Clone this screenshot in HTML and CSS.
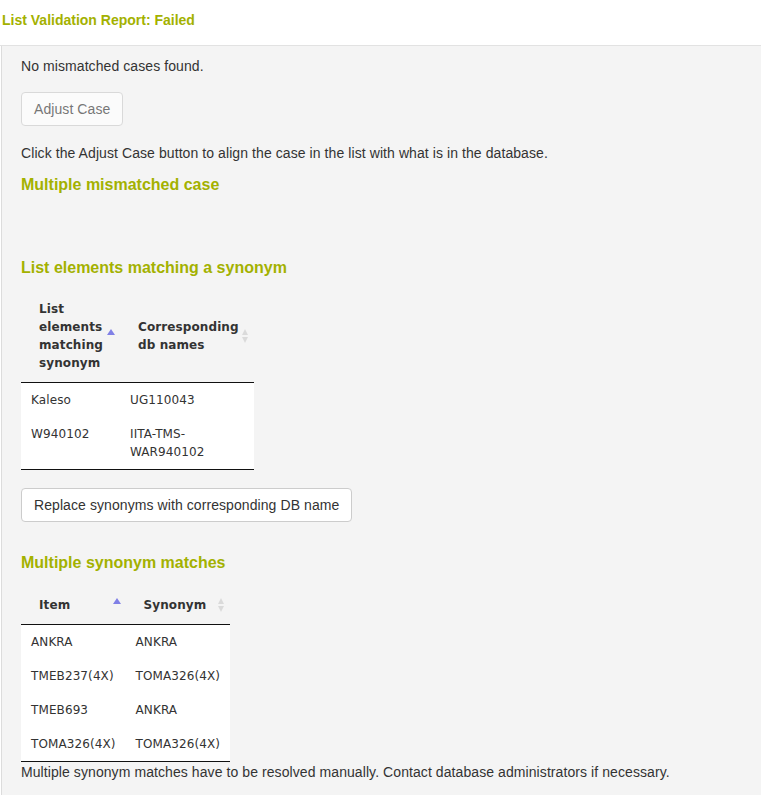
FILE: index.html
```html
<!DOCTYPE html>
<html>
<head>
<meta charset="utf-8">
<link rel="stylesheet" href="styles.css">
</head>
<body>
<div class="modal-header">
  <h3 class="modal-title">List Validation Report: Failed</h3>
</div>
<div class="panel">
  <p class="msg msg-first">No mismatched cases found.</p>
  <button class="btn btn-disabled btn-adjust" disabled>Adjust Case</button>
  <p class="msg msg-click">Click the Adjust Case button to align the case in the list with what is in the database.</p>
  <h4 class="section-title title-mismatch">Multiple mismatched case</h4>
  <h4 class="section-title title-synonym">List elements matching a synonym</h4>
  <table class="data-table table-synonyms">
    <thead>
      <tr>
        <th class="col-a sort-asc">List elements matching synonym</th>
        <th class="col-b sort-both">Corresponding db names</th>
      </tr>
    </thead>
    <tbody>
      <tr><td>Kaleso</td><td>UG110043</td></tr>
      <tr><td>W940102</td><td>IITA-TMS-WAR940102</td></tr>
    </tbody>
  </table>
  <button class="btn btn-replace">Replace synonyms with corresponding DB name</button>
  <h4 class="section-title title-multi">Multiple synonym matches</h4>
  <table class="data-table table-multi">
    <thead>
      <tr>
        <th class="sort-asc">Item</th>
        <th class="sort-both">Synonym</th>
      </tr>
    </thead>
    <tbody>
      <tr><td>ANKRA</td><td>ANKRA</td></tr>
      <tr><td>TMEB237(4X)</td><td>TOMA326(4X)</td></tr>
      <tr><td>TMEB693</td><td>ANKRA</td></tr>
      <tr><td>TOMA326(4X)</td><td>TOMA326(4X)</td></tr>
    </tbody>
  </table>
  <p class="msg msg-last">Multiple synonym matches have to be resolved manually. Contact database administrators if necessary.</p>
</div>
</body>
</html>
```

FILE: styles.css
```css
html, body {
  margin: 0;
  padding: 0;
  background: #ffffff;
}
body {
  font-family: "Liberation Sans", Arial, Helvetica, sans-serif;
  font-size: 14px;
  line-height: 20px;
  color: #333333;
  min-height: 100vh;
  display: flex;
  flex-direction: column;
}
.modal-header {
  box-sizing: border-box;
  height: 46px;
  padding: 10px 2px 0 2px;
  border-bottom: 1px solid #e2e2e2;
  background: #ffffff;
}
.modal-title {
  margin: 0;
  font-size: 14px;
  font-weight: bold;
  line-height: 20px;
  color: #a3b100;
}
.panel {
  flex: 1;
  margin-left: 1px;
  border-left: 1px solid #dcdcdc;
  background: #f4f4f4;
  padding: 10px 0 20px 19px;
  display: flex;
  flex-direction: column;
  align-items: flex-start;
}
.msg {
  margin: 0;
  line-height: 20px;
  letter-spacing: 0.08px;
}
.msg-first { margin-bottom: 16px; }
.btn {
  box-sizing: border-box;
  height: 34px;
  padding: 6px 12px;
  font-family: "Liberation Sans", Arial, Helvetica, sans-serif;
  font-size: 14px;
  line-height: 20px;
  letter-spacing: 0.08px;
  color: #333333;
  background: #ffffff;
  border: 1px solid #cccccc;
  border-radius: 4px;
}
.btn-disabled {
  opacity: 0.65;
}
.btn-adjust { margin-bottom: 17px; }
.msg-click { margin-bottom: 13px; }
.section-title {
  margin: 0;
  font-size: 16px;
  font-weight: bold;
  line-height: 18px;
  color: #a3b100;
}
.title-mismatch { margin-bottom: 65px; }
.title-synonym { margin-bottom: 13px; }
.title-multi { margin-bottom: 14px; }
.data-table {
  border-collapse: separate;
  border-spacing: 0;
  border-bottom: 1px solid #111111;
  font-family: "DejaVu Sans", Verdana, sans-serif;
  font-size: 12px;
  line-height: 18px;
  letter-spacing: 0.1px;
  color: #333333;
}
.data-table th {
  position: relative;
  box-sizing: border-box;
  padding: 10px 18px;
  text-align: left;
  font-weight: bold;
  border-bottom: 1px solid #111111;
  vertical-align: middle;
}
.data-table td {
  padding: 8px 10px;
  background: #ffffff;
  vertical-align: top;
}
.table-synonyms {
  table-layout: fixed;
  width: 233px;
  margin-bottom: 18px;
}
.table-synonyms .col-a { width: 99px; }
.table-synonyms .col-b { width: 134px; }
.sort-asc::after {
  content: "";
  position: absolute;
  right: 5px;
  top: calc(50% - 7px);
  width: 0;
  height: 0;
  border-left: 4.5px solid transparent;
  border-right: 4.5px solid transparent;
  border-bottom: 6px solid #8080e6;
}
.sort-both::before,
.sort-both::after {
  content: "";
  position: absolute;
  right: 6px;
  width: 0;
  height: 0;
  border-left: 3.5px solid transparent;
  border-right: 3.5px solid transparent;
}
.sort-both::before {
  top: calc(50% - 7px);
  border-bottom: 6px solid #dadada;
}
.sort-both::after {
  top: calc(50% + 1px);
  border-top: 6px solid #dadada;
}
.btn-replace { margin-bottom: 32px; }
.msg-last { margin-top: 0; }
```
